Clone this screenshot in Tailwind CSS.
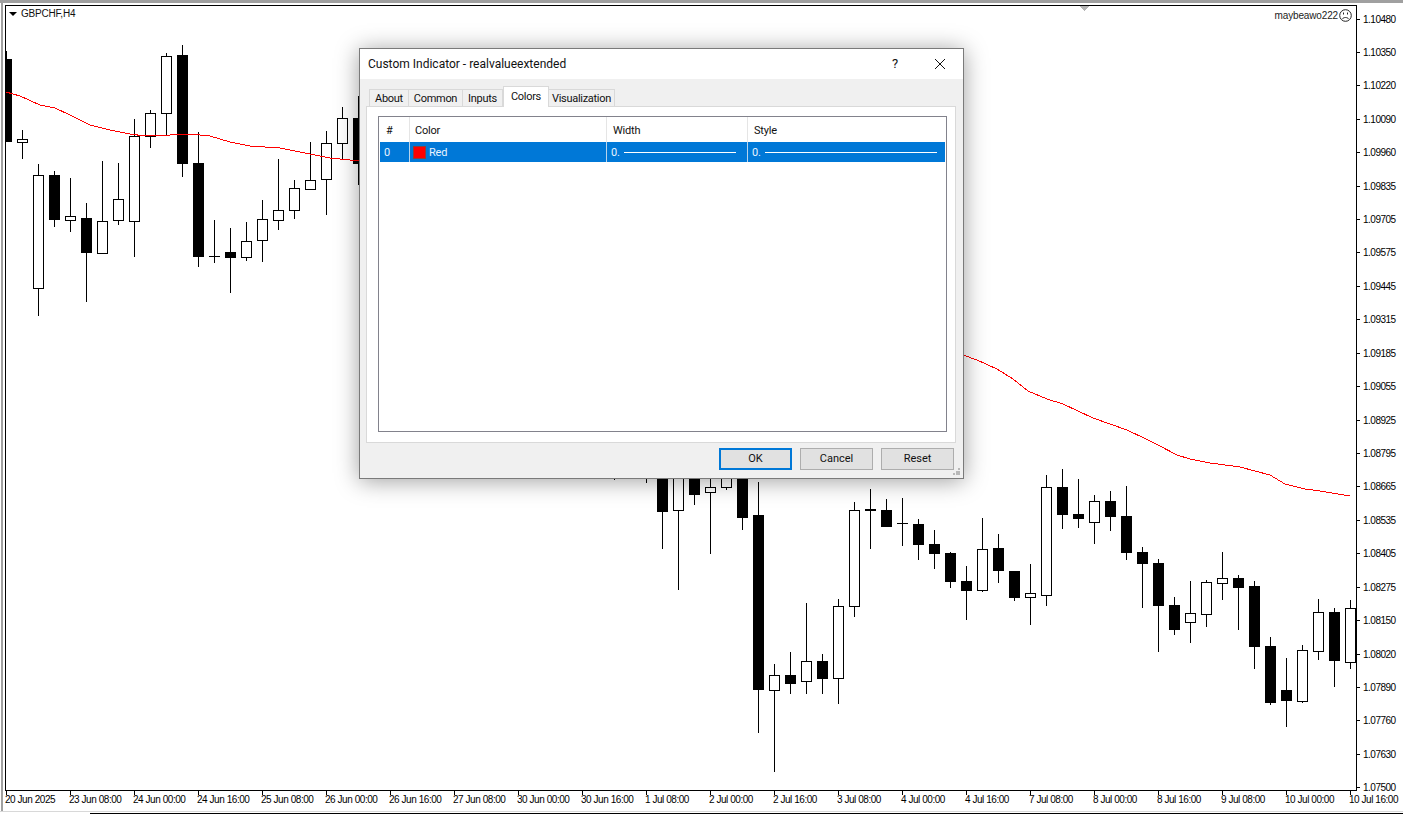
<!DOCTYPE html>
<html lang="en">
<head>
    <meta charset="UTF-8">
    <title>GBPCHF,H4</title>
    <script src="https://cdn.jsdelivr.net/npm/@tailwindcss/browser@4"></script>
</head>
<body class="bg-white overflow-hidden">
    <div class="relative w-[1403px] h-[814px] flex flex-col overflow-hidden bg-white font-['Liberation_Sans',sans-serif] text-[10px] text-black">
        <!-- Window edge -->
        <div class="h-[3px] shrink-0 bg-[#a0a0a0]"></div>

        <div class="h-[808px] shrink-0 ml-px border-l-2 border-[#a0a0a0] pl-[2px] pt-[2px] flex">
            <div class="w-[1352px] shrink-0">
                <!-- Plot -->
                <div class="relative w-[1352px] h-[786px] border border-black">
                    <svg id="plot" class="block" width="1350" height="784" viewBox="6 6 1350 784" shape-rendering="crispEdges"></svg>
                    <div class="absolute left-[3px] top-[2px] flex items-center gap-[4px] text-[#111]">
                        <span class="w-0 h-0 border-x-[4px] border-x-transparent border-t-[4px] border-t-black"></span>
                        <span class="text-[10px] leading-3 tracking-[-0.2px]">GBPCHF,H4</span>
                    </div>
                    <div class="absolute right-[4px] top-[3px] flex items-center gap-px">
                        <span class="text-[10px] leading-3 text-[#222] tracking-[-0.15px]">maybeawo222</span>
                        <svg width="13" height="13" viewBox="0 0 13 13" fill="none" stroke="#222">
                            <circle cx="6.5" cy="6.500" r="5.8"/>
                            <path d="M4.500 3.500v2M8.500 3.500v2"/>
                            <path d="M3.400 10c1-2 5.200-2 6.200 0"/>
                        </svg>
                    </div>
                </div>
                <!-- Time axis -->
                <div class="h-[20px] pl-px flex">
                    <div class="w-[64px] shrink-0"><div class="w-px h-[4px] bg-black"></div><div class="-ml-px -mt-px whitespace-nowrap leading-3 tracking-[-0.45px]">20 Jun 2025</div></div>
                    <div class="w-[64px] shrink-0"><div class="w-px h-[4px] bg-black"></div><div class="-ml-px -mt-px whitespace-nowrap leading-3 tracking-[-0.45px]">23 Jun 08:00</div></div>
                    <div class="w-[64px] shrink-0"><div class="w-px h-[4px] bg-black"></div><div class="-ml-px -mt-px whitespace-nowrap leading-3 tracking-[-0.45px]">24 Jun 00:00</div></div>
                    <div class="w-[64px] shrink-0"><div class="w-px h-[4px] bg-black"></div><div class="-ml-px -mt-px whitespace-nowrap leading-3 tracking-[-0.45px]">24 Jun 16:00</div></div>
                    <div class="w-[64px] shrink-0"><div class="w-px h-[4px] bg-black"></div><div class="-ml-px -mt-px whitespace-nowrap leading-3 tracking-[-0.45px]">25 Jun 08:00</div></div>
                    <div class="w-[64px] shrink-0"><div class="w-px h-[4px] bg-black"></div><div class="-ml-px -mt-px whitespace-nowrap leading-3 tracking-[-0.45px]">26 Jun 00:00</div></div>
                    <div class="w-[64px] shrink-0"><div class="w-px h-[4px] bg-black"></div><div class="-ml-px -mt-px whitespace-nowrap leading-3 tracking-[-0.45px]">26 Jun 16:00</div></div>
                    <div class="w-[64px] shrink-0"><div class="w-px h-[4px] bg-black"></div><div class="-ml-px -mt-px whitespace-nowrap leading-3 tracking-[-0.45px]">27 Jun 08:00</div></div>
                    <div class="w-[64px] shrink-0"><div class="w-px h-[4px] bg-black"></div><div class="-ml-px -mt-px whitespace-nowrap leading-3 tracking-[-0.45px]">30 Jun 00:00</div></div>
                    <div class="w-[64px] shrink-0"><div class="w-px h-[4px] bg-black"></div><div class="-ml-px -mt-px whitespace-nowrap leading-3 tracking-[-0.45px]">30 Jun 16:00</div></div>
                    <div class="w-[64px] shrink-0"><div class="w-px h-[4px] bg-black"></div><div class="-ml-px -mt-px whitespace-nowrap leading-3 tracking-[-0.45px]">1 Jul 08:00</div></div>
                    <div class="w-[64px] shrink-0"><div class="w-px h-[4px] bg-black"></div><div class="-ml-px -mt-px whitespace-nowrap leading-3 tracking-[-0.45px]">2 Jul 00:00</div></div>
                    <div class="w-[64px] shrink-0"><div class="w-px h-[4px] bg-black"></div><div class="-ml-px -mt-px whitespace-nowrap leading-3 tracking-[-0.45px]">2 Jul 16:00</div></div>
                    <div class="w-[64px] shrink-0"><div class="w-px h-[4px] bg-black"></div><div class="-ml-px -mt-px whitespace-nowrap leading-3 tracking-[-0.45px]">3 Jul 08:00</div></div>
                    <div class="w-[64px] shrink-0"><div class="w-px h-[4px] bg-black"></div><div class="-ml-px -mt-px whitespace-nowrap leading-3 tracking-[-0.45px]">4 Jul 00:00</div></div>
                    <div class="w-[64px] shrink-0"><div class="w-px h-[4px] bg-black"></div><div class="-ml-px -mt-px whitespace-nowrap leading-3 tracking-[-0.45px]">4 Jul 16:00</div></div>
                    <div class="w-[64px] shrink-0"><div class="w-px h-[4px] bg-black"></div><div class="-ml-px -mt-px whitespace-nowrap leading-3 tracking-[-0.45px]">7 Jul 08:00</div></div>
                    <div class="w-[64px] shrink-0"><div class="w-px h-[4px] bg-black"></div><div class="-ml-px -mt-px whitespace-nowrap leading-3 tracking-[-0.45px]">8 Jul 00:00</div></div>
                    <div class="w-[64px] shrink-0"><div class="w-px h-[4px] bg-black"></div><div class="-ml-px -mt-px whitespace-nowrap leading-3 tracking-[-0.45px]">8 Jul 16:00</div></div>
                    <div class="w-[64px] shrink-0"><div class="w-px h-[4px] bg-black"></div><div class="-ml-px -mt-px whitespace-nowrap leading-3 tracking-[-0.45px]">9 Jul 08:00</div></div>
                    <div class="w-[64px] shrink-0"><div class="w-px h-[4px] bg-black"></div><div class="-ml-px -mt-px whitespace-nowrap leading-3 tracking-[-0.45px]">10 Jul 00:00</div></div>
                    <div class="w-[64px] shrink-0"><div class="w-px h-[4px] bg-black"></div><div class="-ml-px -mt-px whitespace-nowrap leading-3 tracking-[-0.45px]">10 Jul 16:00</div></div>
                </div>
            </div>

            <!-- Price axis -->
            <div id="prices" class="mt-[6px] h-[785px] flex flex-col justify-between"></div>
        </div>

        <div class="h-px shrink-0 bg-[#d8d8d8]"></div>
        <div class="h-px shrink-0"></div>
        <div class="h-px shrink-0 ml-[90px] bg-black"></div>

        <!-- Dialog -->
        <div class="absolute left-[359px] top-[48px] w-[605px] h-[431px] flex flex-col border border-[#7a7a7a] bg-[#f0f0f0] shadow-[0_2px_22px_rgba(0,0,0,0.38)] font-['Roboto',sans-serif] text-[11px] leading-4 text-[#111]">
            <div class="h-[30px] shrink-0 bg-white flex items-center pl-2 text-[12px]">
                <span class="flex-1">Custom Indicator - realvalueextended</span>
                <span class="w-[12px] text-center text-[13px]">?</span>
                <svg class="ml-[33px] mr-[17px]" width="12" height="12" viewBox="0 0 12 12" stroke="#111" fill="none"><path d="M1 1l10 10M11 1L1 11"/></svg>
            </div>
            <div class="flex-1 flex flex-col pl-[6px] pr-[7px]">
                <div class="h-[27px] shrink-0 pl-[3px] flex items-end tracking-[-0.3px]">
                    <div class="w-[40px] h-[17px] border border-b-0 border-[#d9d9d9] text-center pt-px">About</div>
                    <div class="w-[54px] h-[17px] border border-b-0 border-l-0 border-[#d9d9d9] text-center pt-px">Common</div>
                    <div class="w-[40px] h-[17px] border border-b-0 border-l-0 border-[#d9d9d9] text-center pt-px">Inputs</div>
                    <div class="relative z-10 -mb-px w-[46px] h-[21px] border border-b-0 border-[#d9d9d9] bg-white text-center pt-[2px]">Colors</div>
                    <div class="w-[66px] h-[17px] border border-b-0 border-l-0 border-[#d9d9d9] text-center pt-px">Visualization</div>
                </div>
                <div class="h-[337px] shrink-0 border border-[#d9d9d9] bg-white pl-[11px] pt-[9px]">
                    <div class="w-[569px] h-[316px] border border-[#82828c] pl-px tracking-[-0.2px]">
                        <div class="w-[565px] h-[25px] grid grid-cols-[30px_197px_141px_1fr] items-center">
                            <div class="h-full border-r border-[#e5e5e5] pl-[6px] pt-[2px] flex items-center">#</div>
                            <div class="h-full border-r border-[#e5e5e5] pl-[5px] pt-[2px] flex items-center">Color</div>
                            <div class="h-full border-r border-[#e5e5e5] pl-[6px] pt-[2px] flex items-center">Width</div>
                            <div class="h-full pl-[6px] pt-[2px] flex items-center">Style</div>
                        </div>
                        <div class="w-[565px] h-[20px] grid grid-cols-[30px_197px_141px_1fr] items-center bg-[#0078d7] text-[#e8f4ff]">
                            <div class="h-full border-r border-[#b8d4ec] pl-[4px] pt-[2px] flex items-center">0</div>
                            <div class="h-full border-r border-[#b8d4ec] pl-[3px] flex items-center gap-[3px]">
                                <span class="w-[13px] h-[13px] bg-[#ff0000] border border-[#8a4040]"></span>
                                <span class="pt-px">Red</span>
                            </div>
                            <div class="h-full border-r border-[#b8d4ec] pl-[4px] flex items-center">
                                <span class="w-[13px] pt-px">0.</span>
                                <span class="w-[112px] h-px bg-white"></span>
                            </div>
                            <div class="h-full pl-[4px] flex items-center">
                                <span class="w-[13px] pt-px">0.</span>
                                <span class="w-[172px] h-px bg-white"></span>
                            </div>
                        </div>
                    </div>
                </div>
                <div class="pt-[5px] pr-[2px] flex justify-end gap-2">
                    <button class="w-[73px] h-[22px] border-2 border-[#0078d7] bg-[#e1e1e1] text-center">OK</button>
                    <button class="w-[73px] h-[22px] border border-[#adadad] bg-[#e1e1e1] text-center">Cancel</button>
                    <button class="w-[73px] h-[22px] border border-[#adadad] bg-[#e1e1e1] text-center">Reset</button>
                </div>
            </div>
            <svg class="absolute right-[3px] bottom-[3px]" width="7" height="7" viewBox="0 0 7 7" fill="#b8b8b8" shape-rendering="crispEdges">
                <rect x="5" y="0" width="2" height="2"/><rect x="2.500" y="2.500" width="2" height="2"/><rect x="5" y="2.500" width="2" height="2"/><rect x="0" y="5" width="2" height="2"/><rect x="2.500" y="5" width="2" height="2"/><rect x="5" y="5" width="2" height="2"/>
            </svg>
        </div>
    </div>

    <script>
        // i, high, body top, body bottom, low, kind
        const candles = [
            [0,51,59,142,142,'b'],[1,130,139,142,159,'w'],[2,164,175,288,316,'w'],[3,171,175,220,227,'b'],
            [4,178,216,220,232,'w'],[5,203,218,253,302,'b'],[6,161,221,253,254,'w'],[7,163,199,220,225,'w'],
            [8,119,136,221,257,'w'],[9,110,113,136,148,'w'],[10,53,56,113,135,'w'],[11,45,55,164,177,'b'],
            [12,132,163,257,267,'b'],[13,220,256,257,263,'d'],[14,228,252,258,293,'b'],[15,222,241,257,261,'w'],
            [16,200,219,240,262,'w'],[17,159,210,220,230,'w'],[18,180,188,210,219,'w'],[19,142,180,189,189,'w'],
            [20,131,143,179,215,'w'],[21,107,118,143,159,'w'],[22,96,118,164,185,'b'],
            // below the dialog
            [38,470,470,470,480,'d'],[40,470,470,470,483,'d'],
            [41,470,470,512,549,'b'],[42,470,470,510,590,'w'],[43,470,470,495,505,'b'],[44,470,487,492,554,'w'],
            [45,470,470,487,490,'w'],[46,470,470,518,530,'b'],[47,482,515,690,733,'b'],[48,664,675,690,772,'w'],
            [49,652,675,684,694,'b'],[50,603,661,681,694,'w'],[51,654,661,679,694,'b'],[52,599,606,678,704,'w'],
            [53,502,510,606,617,'w'],[54,489,509,511,549,'b'],[55,499,510,527,527,'b'],[56,498,523,524,546,'d'],
            [57,519,524,545,560,'b'],[58,530,544,554,569,'b'],[59,552,553,582,588,'b'],[60,566,581,591,620,'b'],
            [61,518,549,590,592,'w'],[62,534,548,571,583,'b'],[63,571,571,598,601,'b'],[64,564,593,597,625,'w'],
            [65,475,487,595,606,'w'],[66,469,487,515,529,'b'],[67,479,514,519,528,'b'],[68,495,501,522,544,'w'],
            [69,491,501,517,531,'b'],[70,486,516,553,560,'b'],[71,547,552,564,608,'b'],[72,559,563,606,652,'b'],
            [73,597,605,630,635,'b'],[74,581,613,622,643,'w'],[75,580,582,614,627,'w'],[76,552,578,583,600,'w'],
            [77,575,578,588,630,'b'],[78,581,586,647,669,'b'],[79,637,646,703,705,'b'],[80,658,690,701,727,'b'],
            [81,645,650,701,703,'w'],[82,599,612,651,660,'w'],[83,608,612,661,687,'b'],[84,600,608,662,669,'w']
        ];

        let svg = '<polygon points="1080,6 1089,6 1085,11 1084,11" fill="#b4b4b4"/>';
        for (const [i, high, top, bottom, low, kind] of candles) {
            const x = 6 + 16 * i;
            svg += `<rect x="${x}" y="${high}" width="1" height="${low - high}" fill="#000"/>`;
            if (kind === 'b') svg += `<rect x="${x - 5}" y="${top}" width="11" height="${bottom - top}" fill="#000"/>`;
            if (kind === 'w') svg += `<rect x="${x - 4.5}" y="${top + .5}" width="10" height="${bottom - top}" fill="#fff" stroke="#000"/>`;
            if (kind === 'd') svg += `<rect x="${x - 5}" y="${top}" width="11" height="1" fill="#000"/>`;
        }

        // moving average, left and right of the dialog
        const maLeft = '6,92 20,96 40,105 55,108 70,115 90,125 110,130 130,134 145,136 170,135 190,134 210,136 230,142 250,146 280,148 310,154 330,158 360,161';
        const maRight = '963,355 977,360 997,369 1013,379 1028,391 1047,399 1063,404 1093,418 1127,430 1148,440 1158,445 1177,455 1190,459 1210,463 1240,467 1270,475 1285,484 1305,489 1320,491 1350,496';
        svg += `<polyline points="${maLeft}" fill="none" stroke="#ff0000"/>`;
        svg += `<polyline points="${maRight}" fill="none" stroke="#ff0000"/>`;
        document.getElementById('plot').innerHTML = svg;

        const prices = ['1.10480','1.10350','1.10220','1.10090','1.09960','1.09835','1.09705','1.09575','1.09445','1.09315','1.09185','1.09055','1.08925','1.08795','1.08665','1.08535','1.08405','1.08275','1.08150','1.08020','1.07890','1.07760','1.07630','1.07500'];
        document.getElementById('prices').innerHTML = prices.map(p => `
            <div class="h-4 flex items-center">
                <span class="w-[3px] h-px bg-black"></span>
                <span class="ml-[3px] tracking-[-0.5px]">${p}</span>
            </div>`).join('');
    </script>
</body>
</html>
